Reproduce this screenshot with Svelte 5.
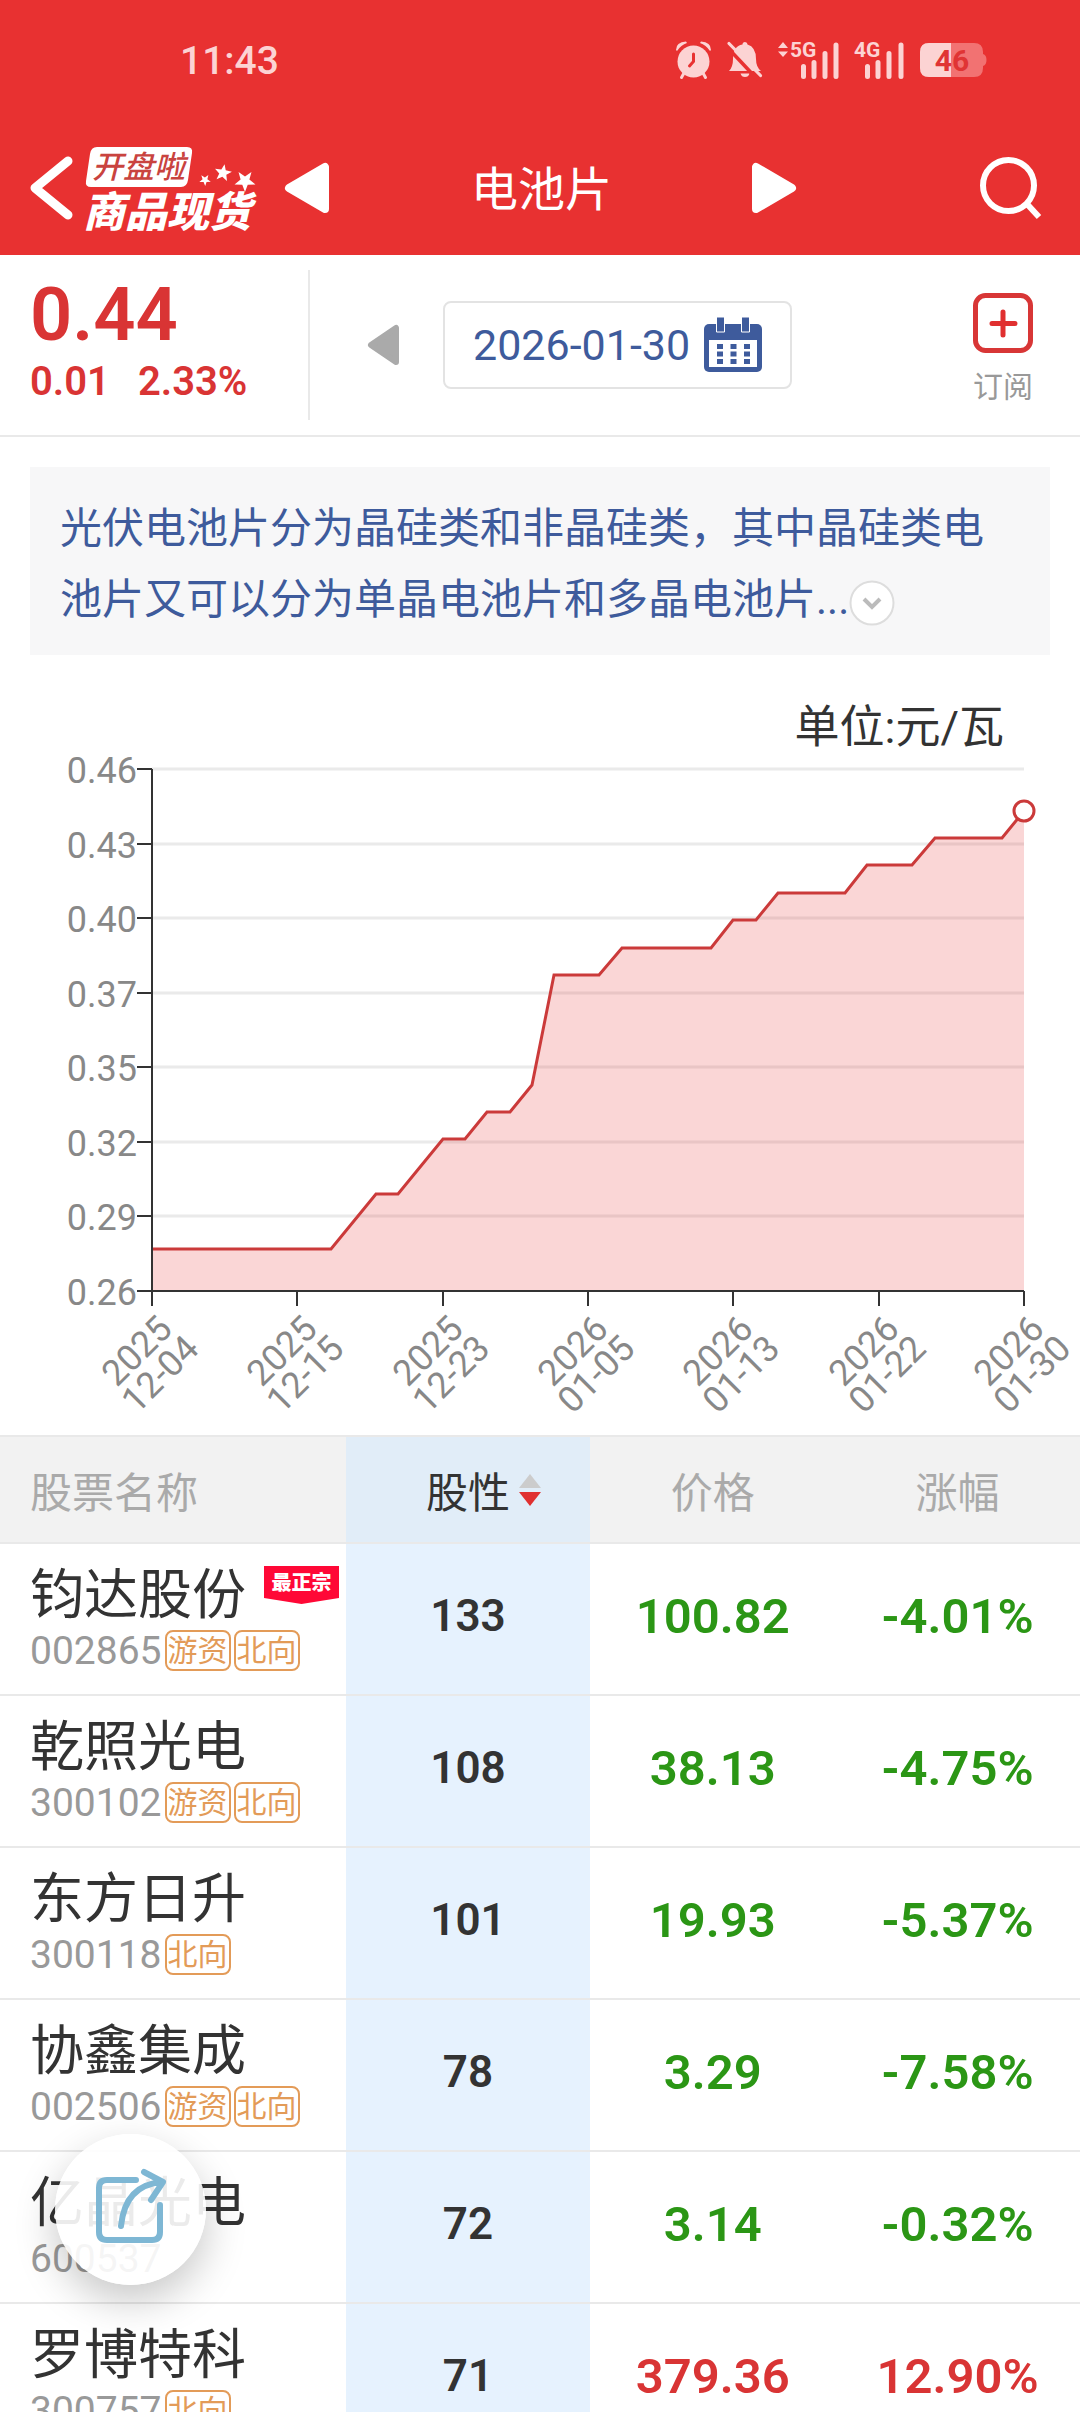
<script>
  const stocks = [
    { name: '钧达股份', code: '002865', tags: ['游资', '北向'], best: true, score: 133, price: '100.82', change: '-4.01%' },
    { name: '乾照光电', code: '300102', tags: ['游资', '北向'], score: 108, price: '38.13', change: '-4.75%' },
    { name: '东方日升', code: '300118', tags: ['北向'], score: 101, price: '19.93', change: '-5.37%' },
    { name: '协鑫集成', code: '002506', tags: ['游资', '北向'], score: 78, price: '3.29', change: '-7.58%' },
    { name: '亿晶光电', code: '600537', tags: [], score: 72, price: '3.14', change: '-0.32%' },
    { name: '罗博特科', code: '300757', tags: ['北向'], score: 71, price: '379.36', change: '12.90%' }
  ];

  // Five-pointed star outline; turn is in degrees.
  function star(cx, cy, r, turn) {
    return Array.from({ length: 10 }, (_, i) => {
      const radius = i % 2 ? r * 0.42 : r;
      const angle = ((i * 36 + turn - 90) * Math.PI) / 180;
      return `${cx + radius * Math.cos(angle)},${cy + radius * Math.sin(angle)}`;
    }).join(' ');
  }
  const stars = [star(121, 35, 6, 34), star(139, 28, 9, 10), star(161, 36, 11, 36)];

  // Plot area of the price chart, in viewBox units.
  const left = 152;
  const right = 1024;
  const top = 38;
  const bottom = 560;

  const yLabels = ['0.46', '0.43', '0.40', '0.37', '0.35', '0.32', '0.29', '0.26'];
  const yTicks = yLabels.map((label, i) => ({
    label,
    y: Math.round(top + (i * (bottom - top)) / (yLabels.length - 1))
  }));

  const dates = [
    ['2025', '12-04'], ['2025', '12-15'], ['2025', '12-23'], ['2026', '01-05'],
    ['2026', '01-13'], ['2026', '01-22'], ['2026', '01-30']
  ];
  const xTicks = dates.map(([year, day], i) => ({
    year,
    day,
    x: Math.round(left + (i * (right - left)) / (dates.length - 1))
  }));

  // [trading day, price steps above the starting price]
  const series = [
    [0, 0], [8, 0], [10, 2], [11, 2], [13, 4], [14, 4], [15, 5], [16, 5], [17, 6], [18, 10], [20, 10],
    [21, 11], [25, 11], [26, 12], [27, 12], [28, 13], [31, 13], [32, 14], [34, 14], [35, 15], [38, 15], [39, 16]
  ];
  const points = series.map(([day, step]) => [
    Math.round(left + (day * (right - left)) / 39),
    Math.round(518 - step * 27.4)
  ]);
  const line = points.map((p) => p.join(',')).join(' ');
  const area = `${left},${bottom} ${line} ${right},${bottom}`;
  const last = points[points.length - 1];
</script>

<div class="app">
  <header>
    <div class="status">
      <span class="clock">11:43</span>
      <div class="indicators">
        <svg class="alarm" viewBox="0 0 37 38" width="37" height="38" aria-hidden="true">
          <circle cx="18.500" cy="20.500" r="16" fill="currentColor" />
          <path d="M1 9Q1 1 11 0.500L12 2Q6 4 2 10zM36 9Q36 1 26 0.500L25 2Q31 4 35 10z" fill="currentColor" />
          <path d="M9 32L6.500 36.500M28 32L30.500 36.500" stroke="currentColor" stroke-width="3" stroke-linecap="round" />
          <path d="M18.500 13V20.500L14.500 25" fill="none" stroke="#e83131" stroke-width="3" stroke-linecap="round" />
        </svg>
        <svg class="mute" viewBox="0 0 36 36" width="36" height="36" aria-hidden="true">
          <path d="M2 29Q6 25 6 17Q6 4 15.500 2.500A2.200 2.200 0 0 1 20.500 2.500Q29 5 29 17Q29 25 34 29zM13.500 31.500H22.500Q21.500 35 18 35Q14.500 35 13.500 31.500z" fill="currentColor" />
          <path d="M0 5L31 38" stroke="#e83131" stroke-width="3.500" />
          <path d="M2 1.500L33.500 33.500" stroke="currentColor" stroke-width="3.200" stroke-linecap="round" />
        </svg>
        <svg class="signal" viewBox="0 0 62 38" width="62" height="38" aria-label="5G">
          <path d="M0 7L5 1L10 7zM0 10.500L5 16L10 10.500z" fill="currentColor" />
          <text x="12" y="16">5G</text>
          <path d="M25.500 25.500V35.500M36 21.500V35.500M47 12.500V35.500M58 4V35.500" />
        </svg>
        <svg class="signal second" viewBox="0 0 50 38" width="50" height="38" aria-label="4G">
          <text x="-1" y="16">4G</text>
          <path d="M12.500 25.500V35.500M23 21.500V35.500M34 12.500V35.500M46 4V35.500" />
        </svg>
        <svg class="battery" viewBox="0 0 67 34" width="67" height="34" aria-label="46%">
          <path d="M9 0H54Q63 0 63 9V11Q66.500 12 66.500 17Q66.500 22 63 23V25Q63 34 54 34H9Q0 34 0 25V9Q0 0 9 0z" fill="#f27272" />
          <path d="M9 0H31V34H9Q0 34 0 25V9Q0 0 9 0z" fill="#fcd3d3" />
          <text x="32" y="28" text-anchor="middle">46</text>
        </svg>
      </div>
    </div>

    <nav>
      <div class="brand">
        <button class="plain" aria-label="返回">
          <svg viewBox="0 0 43 64" width="43" height="64"><path d="M38 5L5 32L38 59" fill="none" stroke="#fff" stroke-width="9" stroke-linecap="round" stroke-linejoin="round" /></svg>
        </button>
        <svg class="logo" viewBox="0 0 178 86" width="178" height="86" aria-label="开盘啦 商品现货">
          <path d="M13 2H103Q109 2 108 8L104 35Q103 42 97 42H7Q1 42 2 36L6 9Q7 2 13 2z" fill="#fff" />
          <text class="logo-top" x="8" y="33">开盘啦</text>
          <text class="logo-main" x="-1" y="82">商品现货</text>
          {#each stars as outline}<polygon points={outline} fill="#fff" />{/each}
        </svg>
      </div>
      <div class="switcher">
        <button class="plain" aria-label="上一个">
          <svg viewBox="0 0 44 50" width="44" height="50"><path d="M40 4V46L4 25z" fill="#fff" stroke="#fff" stroke-width="8" stroke-linejoin="round" /></svg>
        </button>
        <h1>电池片</h1>
        <button class="plain" aria-label="下一个">
          <svg viewBox="0 0 44 50" width="44" height="50"><path d="M4 4V46L40 25z" fill="#fff" stroke="#fff" stroke-width="8" stroke-linejoin="round" /></svg>
        </button>
      </div>
      <button class="plain search" aria-label="搜索">
        <svg viewBox="0 0 62 62" width="62" height="62"><circle cx="28.500" cy="28.500" r="25.500" fill="none" stroke="#fff" stroke-width="6" /><path d="M47 47L59 60" stroke="#fff" stroke-width="6" /></svg>
      </button>
    </nav>
  </header>

  <section class="summary">
    <div class="quote">
      <strong>0.44</strong>
      <div class="delta"><span>0.01</span><span>2.33%</span></div>
    </div>
    <button class="plain earlier" aria-label="前一天">
      <svg viewBox="0 0 32 42" width="32" height="42"><path d="M29 4V38L4 21z" fill="#aaa" stroke="#aaa" stroke-width="6" stroke-linejoin="round" /></svg>
    </button>
    <button class="date">
      <span>2026-01-30</span>
      <svg viewBox="0 0 58 54" width="58" height="54" aria-hidden="true">
        <rect x="0" y="6" width="58" height="48" rx="5" fill="#3e5b9c" />
        <rect x="5" y="22" width="48" height="27" fill="#fff" />
        <path d="M12.500 -1H20.500V14H12.500zM37.500 -1H45.500V14H37.500z" fill="#3e5b9c" stroke="#fff" stroke-width="1" />
        <path d="M13 28.500H46M13 36H46M13 43.500H46" stroke="#3e5b9c" stroke-width="5" stroke-dasharray="6 7.500" />
      </svg>
    </button>
    <button class="plain subscribe">
      <svg viewBox="0 0 60 60" width="60" height="60" aria-hidden="true"><rect x="2.500" y="2.500" width="55" height="55" rx="10" fill="none" stroke="#d83636" stroke-width="5" /><path d="M30 19V42M19 30.500H42" stroke="#e03030" stroke-width="5" stroke-linecap="round" /></svg>
      <span>订阅</span>
    </button>
  </section>

  <section class="about">
    <p>光伏电池片分为晶硅类和非晶硅类，其中晶硅类电池片又可以分为单晶电池片和多晶电池片...<button class="plain more" aria-label="展开"><svg viewBox="0 0 46 46" width="46" height="46"><circle cx="23" cy="23" r="21.500" fill="#fff" stroke="#ddd" stroke-width="2" /><path d="M15 19L23 27L31 19" fill="none" stroke="#bbb" stroke-width="4" /></svg></button></p>
  </section>

  <section class="chart">
    <h2>单位:元/瓦</h2>
    <svg viewBox="0 0 1080 704" role="img" aria-label="价格走势">
      {#each yTicks.slice(0, -1) as tick}
        <line class="grid" x1={left} x2={right} y1={tick.y} y2={tick.y} />
      {/each}
      <polygon class="area" points={area} />
      <polyline class="trend" points={line} />
      <path class="axis" d={`M${left} ${top}V${bottom}H${right}`} />
      {#each yTicks as tick}
        <line class="axis" x1={left - 15} x2={left} y1={tick.y} y2={tick.y} />
        <text x="137" y={tick.y + 14} text-anchor="end">{tick.label}</text>
      {/each}
      {#each xTicks as tick}
        <line class="axis" x1={tick.x} x2={tick.x} y1={bottom} y2={bottom + 15} />
        <g transform={`translate(${tick.x - 3} 632) rotate(-45)`}>
          <text text-anchor="middle" y="-5">{tick.year}</text>
          <text text-anchor="middle" y="28">{tick.day}</text>
        </g>
      {/each}
      <circle class="marker" cx={last[0]} cy={last[1]} r="10" />
    </svg>
  </section>

  <div class="list">
    <table>
      <thead>
        <tr>
          <th scope="col">股票名称</th>
          <th scope="col" class="sorted" aria-sort="descending">
            <button class="plain sort">股性<svg viewBox="0 0 24 34" width="24" height="34" aria-hidden="true"><path d="M12 1L23 15H1z" fill="#ccc" /><path d="M12 33L23 19H1z" fill="#e03030" /></svg></button>
          </th>
          <th scope="col">价格</th>
          <th scope="col">涨幅</th>
        </tr>
      </thead>
      <tbody>
        {#each stocks as stock}
          <tr class:up={!stock.change.startsWith('-')}>
            <td>
              <div class="name">{stock.name}{#if stock.best}<span class="best">最正宗</span>{/if}</div>
              <div class="meta">
                <span class="code">{stock.code}</span>
                {#each stock.tags as tag}<span class="tag">{tag}</span>{/each}
              </div>
            </td>
            <td class="sorted">{stock.score}</td>
            <td class="num">{stock.price}</td>
            <td class="num">{stock.change}</td>
          </tr>
        {/each}
      </tbody>
    </table>
  </div>

  <button class="share" aria-label="分享">
    <svg viewBox="0 0 72 76" width="72" height="76"><path d="M41 11H12Q4 11 4 19V63Q4 71 12 71H57Q65 71 65 63V36M26 57Q30 16 67 13M49 3L68 13L56 31" fill="none" stroke="#7eb7d4" stroke-width="6" stroke-linecap="round" stroke-linejoin="round" /></svg>
  </button>
</div>

<style>
  :global(body) {
    background: #fff;
  }

  .app {
    position: relative;
    display: flex;
    flex-direction: column;
    height: 100vh;
    overflow: hidden;
    color: #333;
    font-family: Roboto, "Noto Sans CJK SC", sans-serif;
  }

  button {
    font: inherit;
    color: inherit;
    cursor: pointer;
  }

  .plain {
    display: flex;
    padding: 0;
    border: 0;
    background: none;
  }

  svg {
    display: block;
    flex: none;
    overflow: visible;
  }

  header {
    flex: none;
    background: #e83131;
    color: #fff;
  }

  .status {
    display: flex;
    align-items: center;
    justify-content: space-between;
    height: 120px;
    padding: 0 93px 0 180px;
    color: #fcd3d3;
  }

  .clock {
    padding-top: 2px;
    font-size: 39px;
    font-weight: 500;
  }

  .indicators {
    display: flex;
    align-items: center;
    gap: 15px;
  }

  .signal path:last-child {
    fill: none;
    stroke: currentColor;
    stroke-width: 5;
    stroke-linecap: round;
  }

  .signal text {
    fill: currentColor;
    font-size: 21px;
    font-weight: 700;
  }

  .battery text {
    fill: #e03434;
    font-size: 30px;
    font-weight: 700;
  }

  nav {
    display: grid;
    grid-template-columns: 1fr 2fr 1fr;
    align-items: center;
    height: 135px;
  }

  .brand {
    display: flex;
    align-items: center;
    gap: 11px;
    padding-left: 30px;
  }

  .logo-top {
    fill: #c9433f;
    font-size: 31px;
    font-style: italic;
    font-weight: 500;
  }

  .logo-main {
    fill: #fff;
    font-size: 42px;
    font-style: italic;
    font-weight: 900;
  }

  .switcher {
    display: flex;
    align-items: center;
    justify-content: space-between;
    padding: 0 14px 0 15px;
  }

  h1,
  h2,
  p {
    margin: 0;
    font-weight: 400;
  }

  h1 {
    padding: 4px 0 0 2px;
    font-size: 47px;
    line-height: 60px;
  }

  .search {
    justify-self: end;
    margin-right: 38px;
  }

  .summary {
    display: flex;
    flex: none;
    align-items: center;
    padding: 15px 47px 15px 30px;
    border-bottom: 2px solid #e9e9e9;
  }

  .quote {
    width: 278px;
    height: 150px;
    border-right: 2px solid #e9e9e9;
    color: #d93434;
  }

  .quote strong {
    display: block;
    font-size: 74px;
    font-weight: 600;
    line-height: 90px;
  }

  .delta {
    display: flex;
    gap: 28px;
    font-size: 40px;
    font-weight: 600;
    line-height: 44px;
  }

  .earlier {
    margin: 0 44px 0 57px;
  }

  .date {
    display: flex;
    align-items: center;
    gap: 14px;
    height: 88px;
    padding: 0 28px;
    border: 2px solid #e3e3e3;
    border-radius: 8px;
    background: #fff;
    color: #3e5b9c;
    font-size: 43px;
  }

  .subscribe {
    flex-direction: column;
    align-items: center;
    gap: 14px;
    margin-left: auto;
    padding-top: 10px;
    color: #999;
    font-size: 30px;
    line-height: 40px;
  }

  .about {
    flex: none;
    margin: 30px 30px 0;
    padding: 26px 30px 20px;
    background: #f7f7f8;
    color: #3e5b9c;
    font-size: 42px;
    line-height: 71px;
  }

  .more {
    display: inline-flex;
    vertical-align: middle;
  }

  .chart {
    flex: none;
    padding-top: 38px;
  }

  .chart h2 {
    padding-right: 76px;
    font-size: 45px;
    line-height: 70px;
    text-align: right;
  }

  .chart svg {
    width: 100%;
    margin-top: -32px;
  }

  .chart text {
    fill: #888;
    font-size: 36px;
  }

  .grid {
    stroke: #eaeaea;
    stroke-width: 3;
  }

  .area {
    fill: #e83131;
    fill-opacity: 0.2;
  }

  .trend {
    fill: none;
    stroke: #cb3a3a;
    stroke-width: 3;
  }

  .axis {
    fill: none;
    stroke: #333;
    stroke-width: 2;
  }

  .marker {
    fill: #fff;
    stroke: #cb3a3a;
    stroke-width: 3;
  }

  .list {
    flex: 1;
    min-height: 0;
    overflow: hidden;
  }

  table {
    width: 100%;
    border-collapse: separate;
    border-spacing: 0;
    table-layout: fixed;
  }

  th {
    box-sizing: border-box;
    height: 109px;
    padding: 0;
    border-top: 2px solid #e9e9e9;
    border-bottom: 2px solid #e9e9e9;
    background: #f2f2f2;
    color: #aaa;
    font-size: 42px;
    font-weight: 400;
  }

  th:first-child {
    width: 32%;
    box-sizing: border-box;
    padding-left: 30px;
    text-align: left;
  }

  th.sorted {
    padding-left: 32px;
    background: #e1edf8;
    color: #333;
  }

  .sort {
    align-items: center;
    gap: 8px;
    margin: 0 auto;
  }

  td {
    box-sizing: border-box;
    height: 152px;
    padding: 0 0 6px;
    border-bottom: 2px solid #e9e9e9;
    text-align: center;
    white-space: nowrap;
  }

  td:first-child {
    padding: 0 0 0 30px;
    text-align: left;
    vertical-align: top;
  }

  td.sorted {
    background: #e6f2fe;
    font-size: 44px;
    font-weight: 600;
  }

  .num {
    color: #2b9615;
    font-size: 49px;
    font-weight: 600;
  }

  .up .num {
    color: #d93434;
  }

  .name {
    display: flex;
    align-items: flex-start;
    gap: 18px;
    height: 63px;
    padding-top: 20px;
    font-size: 54px;
    line-height: 64px;
  }

  .best {
    width: 75px;
    height: 38px;
    margin-top: 2px;
    background: #ff0836;
    clip-path: polygon(0 0, 100% 0, 100% 84%, 50% 100%, 0 84%);
    color: #fff;
    font-size: 20px;
    font-weight: 900;
    line-height: 34px;
    text-align: center;
  }

  .meta {
    display: flex;
    align-items: center;
    gap: 3px;
    height: 46px;
    color: #999;
  }

  .code {
    padding-top: 2px;
    font-size: 39px;
    line-height: 46px;
  }

  .tag {
    padding: 0 1px;
    border: 2px solid #e39b58;
    border-radius: 8px;
    color: #e39b58;
    font-size: 30px;
    line-height: 37px;
  }

  .share {
    position: absolute;
    bottom: 127px;
    left: 55px;
    display: flex;
    align-items: center;
    justify-content: center;
    width: 151px;
    height: 151px;
    padding: 0 0 6px;
    border: 0;
    border-radius: 50%;
    background: rgba(255, 255, 255, 0.9);
    box-shadow: 0 16px 40px rgba(0, 0, 0, 0.22);
  }
</style>
